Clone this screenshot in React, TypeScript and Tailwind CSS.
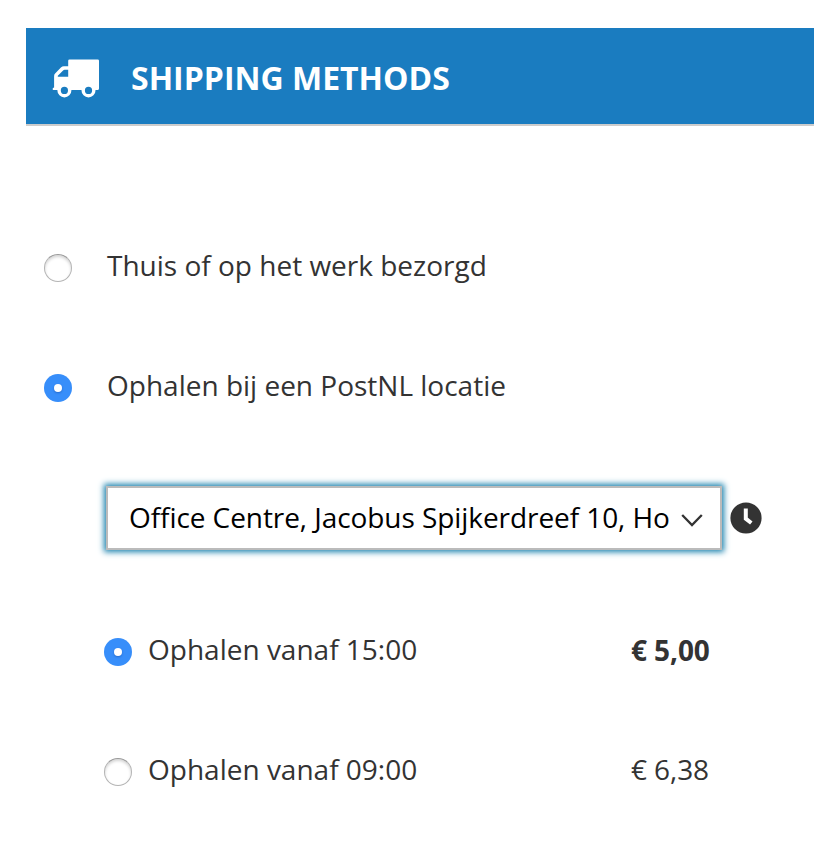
function Radio({ checked = false }: { checked?: boolean }) {
  if (checked) {
    return (
      <span className="flex size-7 shrink-0 items-center justify-center rounded-full bg-[#378efa]">
        <span className="size-2 rounded-full bg-white shadow-[0_1px_2px_rgba(0,40,120,0.35)]" />
      </span>
    );
  }
  return (
    <span className="size-7 shrink-0 rounded-full border border-[#b4b4b4] border-t-[#999] bg-white shadow-[inset_0_2px_3px_rgba(0,0,0,0.17)]" />
  );
}

function TruckIcon() {
  return (
    <svg className="h-[39px] w-[48px] shrink-0" viewBox="0 0 48 39" aria-hidden="true">
      <path
        fill="#fff"
        fillRule="evenodd"
        d="M17.500.400h28.200q1.300 0 1.300 1.300v27.800q0 1.600-1.600 1.600H2Q.6 31.100.6 29.900T2.100 28.500V17q0-1.400 1-2.400l5.800-6q1.300-1.400 3.100-1.400h4.200V1.700q0-1.300 1.300-1.300ZM16.200 10.800h-3.600q-.9 0-1.500.6L5.800 16.700v1.100h10.400Z"
      />
      <g fill="#1a7cc0" stroke="#fff" strokeWidth="3.400">
        <circle cx="12.400" cy="31.400" r="5.300" />
        <circle cx="36.500" cy="31.400" r="5.300" />
      </g>
    </svg>
  );
}

export default function App() {
  return (
    <main className="flex h-[854px] w-[840px] flex-col bg-white px-[26px] pt-7 font-['Open_Sans',sans-serif] text-[28px] leading-10 text-[#333]">
      <header className="flex h-[98px] shrink-0 items-center border-b-2 border-[#ccc] bg-[#1a7cc0] pl-[26px] text-white">
        <span className="flex pt-[5px]">
          <TruckIcon />
        </span>
        <h1 className="ml-[31px] pt-1 text-[32px] font-bold">SHIPPING METHODS</h1>
      </header>

      <label className="mt-[122px] flex h-10 items-center pl-[18px]">
        <Radio />
        <span className="-mt-1.5 ml-[35px]">Thuis of op het werk bezorgd</span>
      </label>
      <label className="mt-20 flex h-10 items-center pl-[18px]">
        <Radio checked />
        <span className="-mt-1.5 ml-[35px]">Ophalen bij een PostNL locatie</span>
      </label>

      <div className="mt-[78px] flex h-16 items-center pl-20">
        <div className="flex h-16 w-[616px] items-center border-2 border-[#bbb] bg-white pl-[21px] text-black shadow-[0_0_6px_2px_#1a82ae]">
          <span className="-mt-0.5 w-[552px] whitespace-nowrap tracking-[-0.07px]">
            Office Centre, Jacobus Spijkerdreef 10, Ho
          </span>
          <svg className="mt-[3px] h-[14px] w-[22px] shrink-0" viewBox="0 0 22 14" fill="none" aria-hidden="true">
            <path d="M1.200 2 11 12 20.800 2" stroke="#333" strokeWidth="2.300" />
          </svg>
        </div>
        <svg className="ml-2 size-8" viewBox="0 0 32 32" aria-hidden="true">
          <circle cx="16" cy="16" r="15.600" fill="#333" />
          <path d="M15.800 6.500v10.200l5.500 4.300" fill="none" stroke="#fff" strokeWidth="4" />
        </svg>
      </div>

      <label className="mt-[82px] flex h-10 items-center pl-[78px]">
        <Radio checked />
        <span className="-mt-1.5 ml-4 w-[483px]">Ophalen vanaf 15:00</span>
        <span className="-mt-1 font-bold tracking-[-0.1px]">€ 5,00</span>
      </label>
      <label className="mt-20 flex h-10 items-center pl-[78px]">
        <Radio />
        <span className="-mt-1.5 ml-4 w-[483px]">Ophalen vanaf 09:00</span>
        <span className="-mt-1.5 tracking-[-0.1px]">€ 6,38</span>
      </label>
    </main>
  );
}
